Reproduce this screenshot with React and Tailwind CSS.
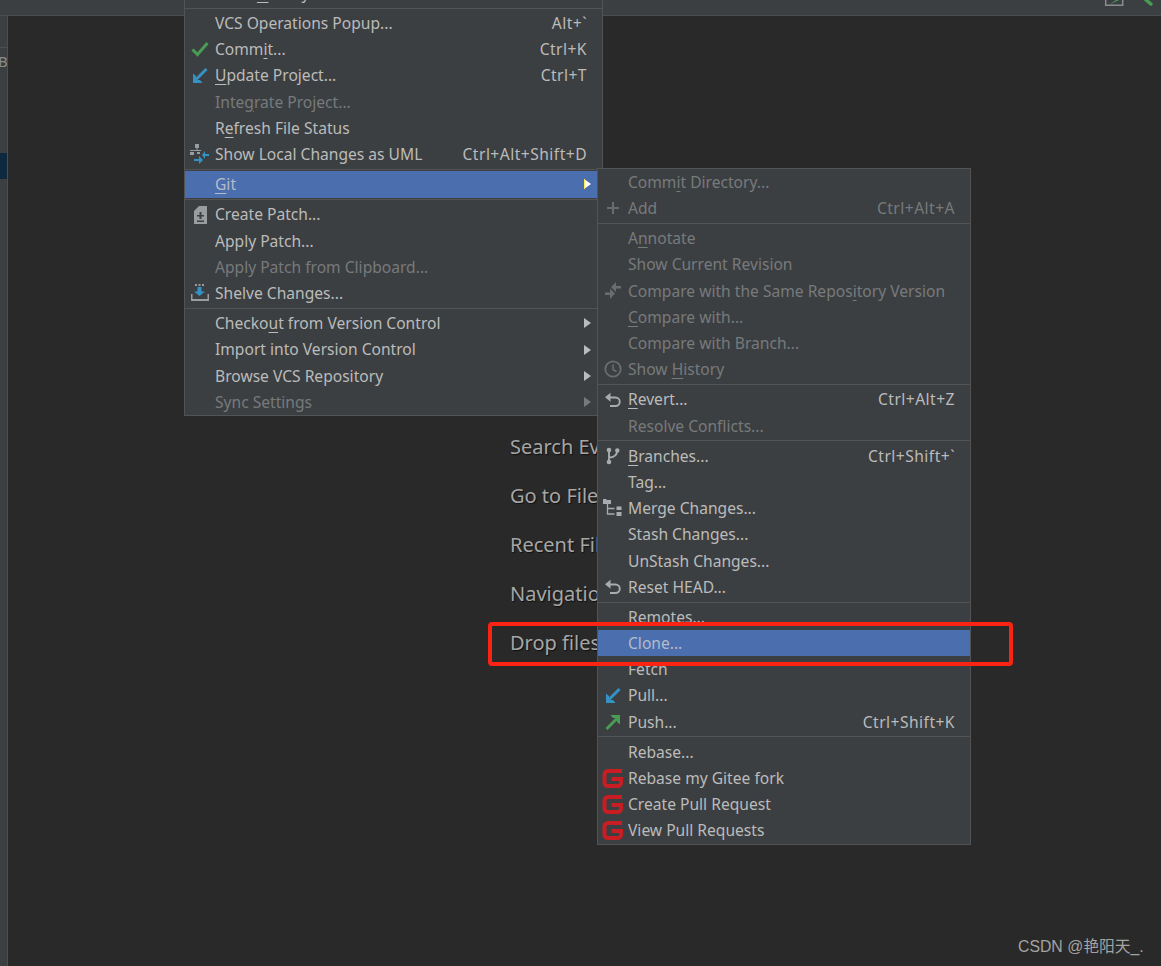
import React from 'react';

const FONT = { fontFamily: '"Noto Sans", "Noto Sans CJK SC", sans-serif' };

// Icons drawn to match the IDE's action icons
const CheckIcon = () => (
  <svg width="18" height="16" viewBox="0 0 18 16" fill="none">
    <path d="M1.500 8.500l5 5L16.500 2" stroke="#499c54" strokeWidth="3" />
  </svg>
);

const UpdateIcon = () => (
  <svg width="18" height="18" viewBox="0 0 18 18" fill="none">
    <path d="M15.500 2L5 12.500" stroke="#3592c4" strokeWidth="3" />
    <path d="M2 6.500V16h9.500L9 13H5V9z" fill="#3592c4" />
  </svg>
);

const PushIcon = () => (
  <svg width="18" height="18" viewBox="0 0 18 18" fill="none">
    <path d="M2.500 16L13 5.500" stroke="#499c54" strokeWidth="3" />
    <path d="M16 11.500V2H6.500L9 5h4v4z" fill="#499c54" />
  </svg>
);

const UmlIcon = () => (
  <svg width="20" height="20" viewBox="0 0 20 20">
    <path d="M5 0h4v4H5zM6.500 4h1v2h-1zM0 6h11v1H0zM0 8h4v3H0zM7 8h3v2H7z" fill="#9a9da0" />
    <path d="M12 11l3-4v3h4v2h-4v3z" fill="#3592c4" />
    <path d="M13 16l-4-4v3H4v2h5v3z" fill="#3592c4" />
  </svg>
);

const PatchIcon = () => (
  <svg width="13" height="18" viewBox="0 0 13 18">
    <path d="M5 0h8v18H0V5z" fill="#9a9da0" />
    <path d="M5.500 6h2v3H10v1.500H7.500V13h-2v-2.500H3V9h2.500zM3 14.500h7V16H3z" fill="#3c3f41" />
  </svg>
);

const ShelveIcon = () => (
  <svg width="20" height="20" viewBox="0 0 20 20">
    <path d="M5 1h2v2H5zM8.500 1h2v2h-2zM12 1h2v2h-2z" fill="#9a9da0" />
    <path d="M7.500 4h4v4.500H15L9.500 13 4 8.500h3.500z" fill="#3592c4" />
    <path d="M1 11h1.500v5h15v-5H19v7H1z" fill="#9a9da0" />
  </svg>
);

const PlusIcon = () => (
  <svg width="14" height="14" viewBox="0 0 14 14">
    <path d="M6 1h2v5h5v2H8v5H6V8H1V6h5z" fill="#6a6d70" />
  </svg>
);

const CompareIcon = () => (
  <svg width="20" height="20" viewBox="0 0 20 20">
    <path d="M8 6l5-5v4h5v2.500h-5V11z" fill="#6a6d70" />
    <path d="M12 12.500l-5-5v4H2V14h5v4z" fill="#6a6d70" />
  </svg>
);

const ClockIcon = () => (
  <svg width="18" height="18" viewBox="0 0 18 18" fill="none">
    <circle cx="9" cy="9" r="7.700" stroke="#6a6d70" strokeWidth="1.800" />
    <path d="M9 4.500V9.500l3.500 2" stroke="#6a6d70" strokeWidth="1.600" />
  </svg>
);

const RevertIcon = () => (
  <svg width="18" height="16" viewBox="0 0 18 16" fill="none">
    <path d="M3 5.500h8.500a4 4 0 0 1 0 8.500H6" stroke="#a9acaf" strokeWidth="1.900" />
    <path d="M6.500 .800v9L1 5.300z" fill="#a9acaf" />
  </svg>
);

const BranchIcon = () => (
  <svg width="14" height="18" viewBox="0 0 14 18" fill="none">
    <circle cx="3" cy="3" r="2.300" fill="#a9acaf" />
    <circle cx="3" cy="15" r="2.300" fill="#a9acaf" />
    <circle cx="11.300" cy="3.500" r="2.200" fill="#a9acaf" />
    <path d="M3 3v12M3 10.500c5 0 8-1.500 8.300-7" stroke="#a9acaf" strokeWidth="1.900" />
  </svg>
);

const MergeIcon = () => (
  <svg width="20" height="20" viewBox="0 0 20 20" fill="none">
    <path d="M0 1h3l1 1h4v4H0z" fill="#a9acaf" />
    <path d="M4.500 6v10h7M4.500 10.500h7" stroke="#a9acaf" strokeWidth="1.300" />
    <path d="M13.500 8.500h5v3.500h-5zM13.500 14h5v4h-5z" fill="#a9acaf" />
  </svg>
);

const GiteeIcon = () => (
  <svg width="21" height="21" viewBox="0 0 21 21" fill="none" className="-ml-[2px]">
    <path d="M20 3H6A3.500 3.500 0 0 0 2.500 6.500v8A3.500 3.500 0 0 0 6 18h9.500a3.500 3.500 0 0 0 3.500-3.500V11H9.500" stroke="#c71d23" strokeWidth="4" />
  </svg>
);

const FILE_MENU = [
  { label: 'Local History', u: 6, arrow: true },
  { sep: true },
  { label: 'VCS Operations Popup...', shortcut: 'Alt+`' },
  { label: 'Commit...', u: 4, icon: <CheckIcon />, shortcut: 'Ctrl+K' },
  { label: 'Update Project...', u: 0, icon: <UpdateIcon />, shortcut: 'Ctrl+T' },
  { label: 'Integrate Project...', u: 4, disabled: true },
  { label: 'Refresh File Status', u: 1 },
  { label: 'Show Local Changes as UML', icon: <UmlIcon />, shortcut: 'Ctrl+Alt+Shift+D' },
  { sep: true },
  { label: 'Git', u: 0, arrow: true, active: true },
  { sep: true },
  { label: 'Create Patch...', icon: <PatchIcon /> },
  { label: 'Apply Patch...' },
  { label: 'Apply Patch from Clipboard...', disabled: true },
  { label: 'Shelve Changes...', icon: <ShelveIcon /> },
  { sep: true },
  { label: 'Checkout from Version Control', u: 6, arrow: true },
  { label: 'Import into Version Control', arrow: true },
  { label: 'Browse VCS Repository', arrow: true },
  { label: 'Sync Settings', arrow: true, disabled: true },
];

const GIT_MENU = [
  { label: 'Commit Directory...', u: 4, disabled: true },
  { label: 'Add', icon: <PlusIcon />, shortcut: 'Ctrl+Alt+A', disabled: true },
  { sep: true },
  { label: 'Annotate', u: 1, disabled: true },
  { label: 'Show Current Revision', disabled: true },
  { label: 'Compare with the Same Repository Version', u: 27, icon: <CompareIcon />, disabled: true },
  { label: 'Compare with...', u: 0, disabled: true },
  { label: 'Compare with Branch...', disabled: true },
  { label: 'Show History', u: 5, icon: <ClockIcon />, disabled: true },
  { sep: true },
  { label: 'Revert...', u: 0, icon: <RevertIcon />, shortcut: 'Ctrl+Alt+Z' },
  { label: 'Resolve Conflicts...', disabled: true },
  { sep: true },
  { label: 'Branches...', u: 0, icon: <BranchIcon />, shortcut: 'Ctrl+Shift+`' },
  { label: 'Tag...' },
  { label: 'Merge Changes...', icon: <MergeIcon /> },
  { label: 'Stash Changes...' },
  { label: 'UnStash Changes...' },
  { label: 'Reset HEAD...', icon: <RevertIcon /> },
  { sep: true },
  { label: 'Remotes...' },
  { label: 'Clone...', active: true },
  { label: 'Fetch' },
  { label: 'Pull...', icon: <UpdateIcon /> },
  { label: 'Push...', icon: <PushIcon />, shortcut: 'Ctrl+Shift+K' },
  { sep: true },
  { label: 'Rebase...' },
  { label: 'Rebase my Gitee fork', icon: <GiteeIcon /> },
  { label: 'Create Pull Request', icon: <GiteeIcon /> },
  { label: 'View Pull Requests', icon: <GiteeIcon /> },
];

const Label = ({ text, u }) => {
  if (u === undefined) return <span>{text}</span>;
  return (
    <span>
      {text.slice(0, u)}
      <span className="underline underline-offset-[3px]">{text[u]}</span>
      {text.slice(u + 1)}
    </span>
  );
};

const MenuRow = ({ item }) => {
  const color = item.disabled ? 'text-[#777a7c]' : item.active ? 'text-[#b4bcc9]' : 'text-[#bbbbbb]';
  return (
    <div className={`flex h-[26.2px] items-center whitespace-nowrap pr-[15px] ${color} ${item.active ? 'bg-[#4b6eaf]' : ''}`}>
      <div className="flex w-[30px] shrink-0 items-center justify-center">{item.icon}</div>
      <div className="flex-1 pt-[1px]">
        <Label text={item.label} u={item.u} />
      </div>
      {item.shortcut && <div className="pt-[1px] tracking-[0.47px]">{item.shortcut}</div>}
      {item.arrow && (
        <svg width="8" height="10" viewBox="0 0 8 10" className="-mr-[5px]">
          <path d="M0 0l7 5-7 5z" fill={item.active ? '#ffffff' : item.disabled ? '#777a7c' : '#bbbbbb'} />
          {item.active && <path d="M.5 0v10" stroke="#ffee44" />}
        </svg>
      )}
    </div>
  );
};

const Menu = ({ items, className }) => (
  <div className={`absolute border border-[#515354] bg-[#3c3f41] text-[15.6px] ${className}`}>
    {items.map((item, i) =>
      item.sep ? (
        <div key={i} className="flex h-[4px] items-center">
          <div className="h-px w-full bg-[#515354]" />
        </div>
      ) : (
        <MenuRow key={i} item={item} />
      ),
    )}
  </div>
);

const HINTS = ['Search Everywhere', 'Go to File', 'Recent Files', 'Navigation Bar', 'Drop files here to open'];

export default function App() {
  return (
    <div className="relative h-[966px] w-[1161px] overflow-hidden bg-[#292929]" style={FONT}>
      {/* Top toolbar */}
      <div className="flex h-[16px] items-start justify-end border-b border-[#4b4d4f] bg-[#3c3f41] pr-[5px]">
        <svg width="60" height="15" viewBox="0 0 60 15" fill="none">
          <path d="M9.700 0v5.300h17V0" stroke="#8a8d90" strokeWidth="1.500" />
          <path d="M13 5l7-5h3z" fill="#499c54" />
          <path d="M49 -1l7 6" stroke="#499c54" strokeWidth="3.500" />
        </svg>
      </div>

      <div className="flex h-[950px]">
        {/* Left tool strip */}
        <div className="w-[8px] shrink-0 overflow-hidden border-r border-[#4b4d4f] bg-[#3c3f41]">
          <div className="mt-[31px] h-[97px] border-t border-[#4b4d4f] pt-[3px] text-[15px] leading-[20px] text-[#888b8d]">
            <div className="-ml-[2px]">Ba</div>
          </div>
          <div className="mt-[9px] h-[26px] bg-[#0d293e]" />
        </div>

        {/* Empty editor hints */}
        <div className="flex-1 pl-[502px] pt-[416px]">
          {HINTS.map((hint) => (
            <div key={hint} className="mb-[20px] h-[29px] whitespace-nowrap text-[20px] leading-[29px] text-[#a6a6a6] [text-shadow:1px_1px_1px_#111111]">
              {hint}
            </div>
          ))}
        </div>
      </div>

      <Menu items={FILE_MENU} className="left-[184px] top-[-21px] w-[419px]" />
      <Menu items={GIT_MENU} className="left-[597px] top-[168px] w-[374px]" />

      {/* Red annotation box */}
      <div className="absolute left-[488px] top-[622px] h-[44px] w-[525px] rounded-[4px] border-4 border-[#fb2314]" />

      <div className="absolute left-[1018px] top-[936px] whitespace-nowrap text-[15.8px] leading-[22px] text-[#a3a3a3]" style={{ fontFamily: '"Liberation Sans", "Noto Sans CJK SC", sans-serif' }}>
        CSDN @艳阳天_.
      </div>
    </div>
  );
}
